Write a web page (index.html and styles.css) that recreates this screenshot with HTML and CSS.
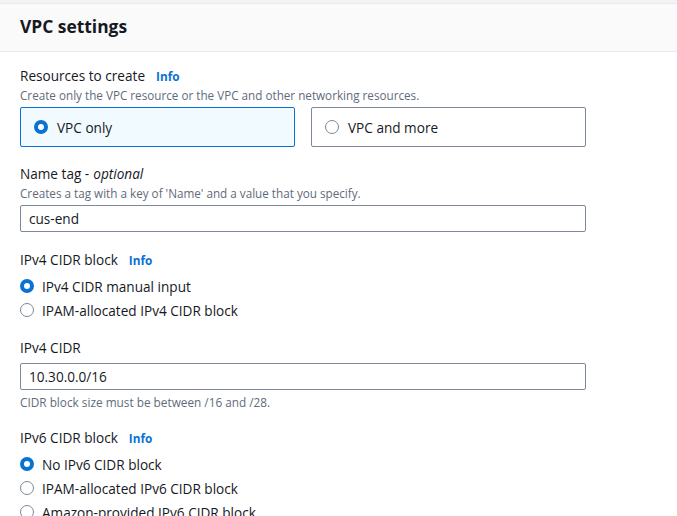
FILE: index.html
```html
<!DOCTYPE html>
<html>
<head>
<meta charset="utf-8">
<link rel="stylesheet" href="styles.css">
</head>
<body>
<div class="topstrip"></div>
<div class="panel">
  <div class="panel-header"><h2>VPC settings</h2></div>
  <div class="panel-body">
    <div class="field">
      <div class="label">Resources to create <span class="info">Info</span></div>
      <div class="desc">Create only the VPC resource or the VPC and other networking resources.</div>
      <div class="tiles">
        <div class="tile selected"><span class="radio on"></span><span>VPC only</span></div>
        <div class="tile"><span class="radio"></span><span>VPC and more</span></div>
      </div>
    </div>
    <div class="field">
      <div class="label">Name tag - <i>optional</i></div>
      <div class="desc">Creates a tag with a key of 'Name' and a value that you specify.</div>
      <div class="input">cus-end</div>
    </div>
    <div class="field group">
      <div class="label">IPv4 CIDR block <span class="info">Info</span></div>
      <div class="radios">
        <div class="opt"><span class="radio on"></span><span>IPv4 CIDR manual input</span></div>
        <div class="opt"><span class="radio"></span><span>IPAM-allocated IPv4 CIDR block</span></div>
      </div>
    </div>
    <div class="field">
      <div class="label">IPv4 CIDR</div>
      <div class="input">10.30.0.0/16</div>
      <div class="desc after">CIDR block size must be between /16 and /28.</div>
    </div>
    <div class="field group">
      <div class="label">IPv6 CIDR block <span class="info">Info</span></div>
      <div class="radios">
        <div class="opt"><span class="radio on"></span><span>No IPv6 CIDR block</span></div>
        <div class="opt"><span class="radio"></span><span>IPAM-allocated IPv6 CIDR block</span></div>
        <div class="opt"><span class="radio"></span><span>Amazon-provided IPv6 CIDR block</span></div>
      </div>
    </div>
  </div>
</div>
</body>
</html>
```

FILE: styles.css
```css
* { box-sizing: border-box; }
html, body { margin: 0; padding: 0; background: #fff; }
body { font-family: "Open Sans", "Noto Sans", sans-serif; color: #16191f; font-size: 13.6px; width: 677px; height: 516px; overflow: hidden; }
.topstrip { height: 4px; background: #f2f3f3; border-bottom: 1px solid #e9ebed; }
.panel-header { height: 48px; background: #fafafa; border-bottom: 1px solid #e9ebed; padding: 0 20px 3px; display: flex; align-items: center; }
.panel-header h2 { margin: 0; font-size: 17.4px; font-weight: 700; color: #16191f; }
.panel-body { padding: 14px 20px 0; width: 606px; }
.field { margin-bottom: 18px; }
.field:first-child { margin-bottom: 17px; }
.field.group { margin-bottom: 16px; }
.label { font-size: 13.6px; line-height: 20px; display: flex; align-items: center; gap: 11px; }
.label i { margin-left: -7px; }
.info { color: #0972d3; font-weight: 700; font-size: 11.8px; }
.desc { font-size: 11.7px; color: #5f6b7a; line-height: 18px; }
.desc.after { margin-top: 4px; font-size: 11.8px; line-height: 16px; }
.tiles { display: flex; gap: 16px; margin-top: 3px; }
.tile { flex: 1; height: 40px; border: 1px solid #7d8998; border-radius: 2px; display: flex; align-items: center; gap: 9px; padding: 0 13px; font-size: 13.6px; }
.tile.selected { border-color: #0972d3; background: #f1faff; }
.radio { width: 14px; height: 14px; border-radius: 50%; border: 1.5px solid #7d8998; flex: none; background: #fff; }
.radio.on { border: 4px solid #0972d3; }
.input { height: 27px; border: 1px solid #7d8998; border-radius: 2px; padding: 0 8px; display: flex; align-items: center; margin-top: 3px; font-size: 13.6px; }
.label + .input { margin-top: 5px; }
.radios { margin-top: 4px; }
.opt { display: flex; align-items: center; gap: 8px; height: 24px; font-size: 13.6px; }
```
